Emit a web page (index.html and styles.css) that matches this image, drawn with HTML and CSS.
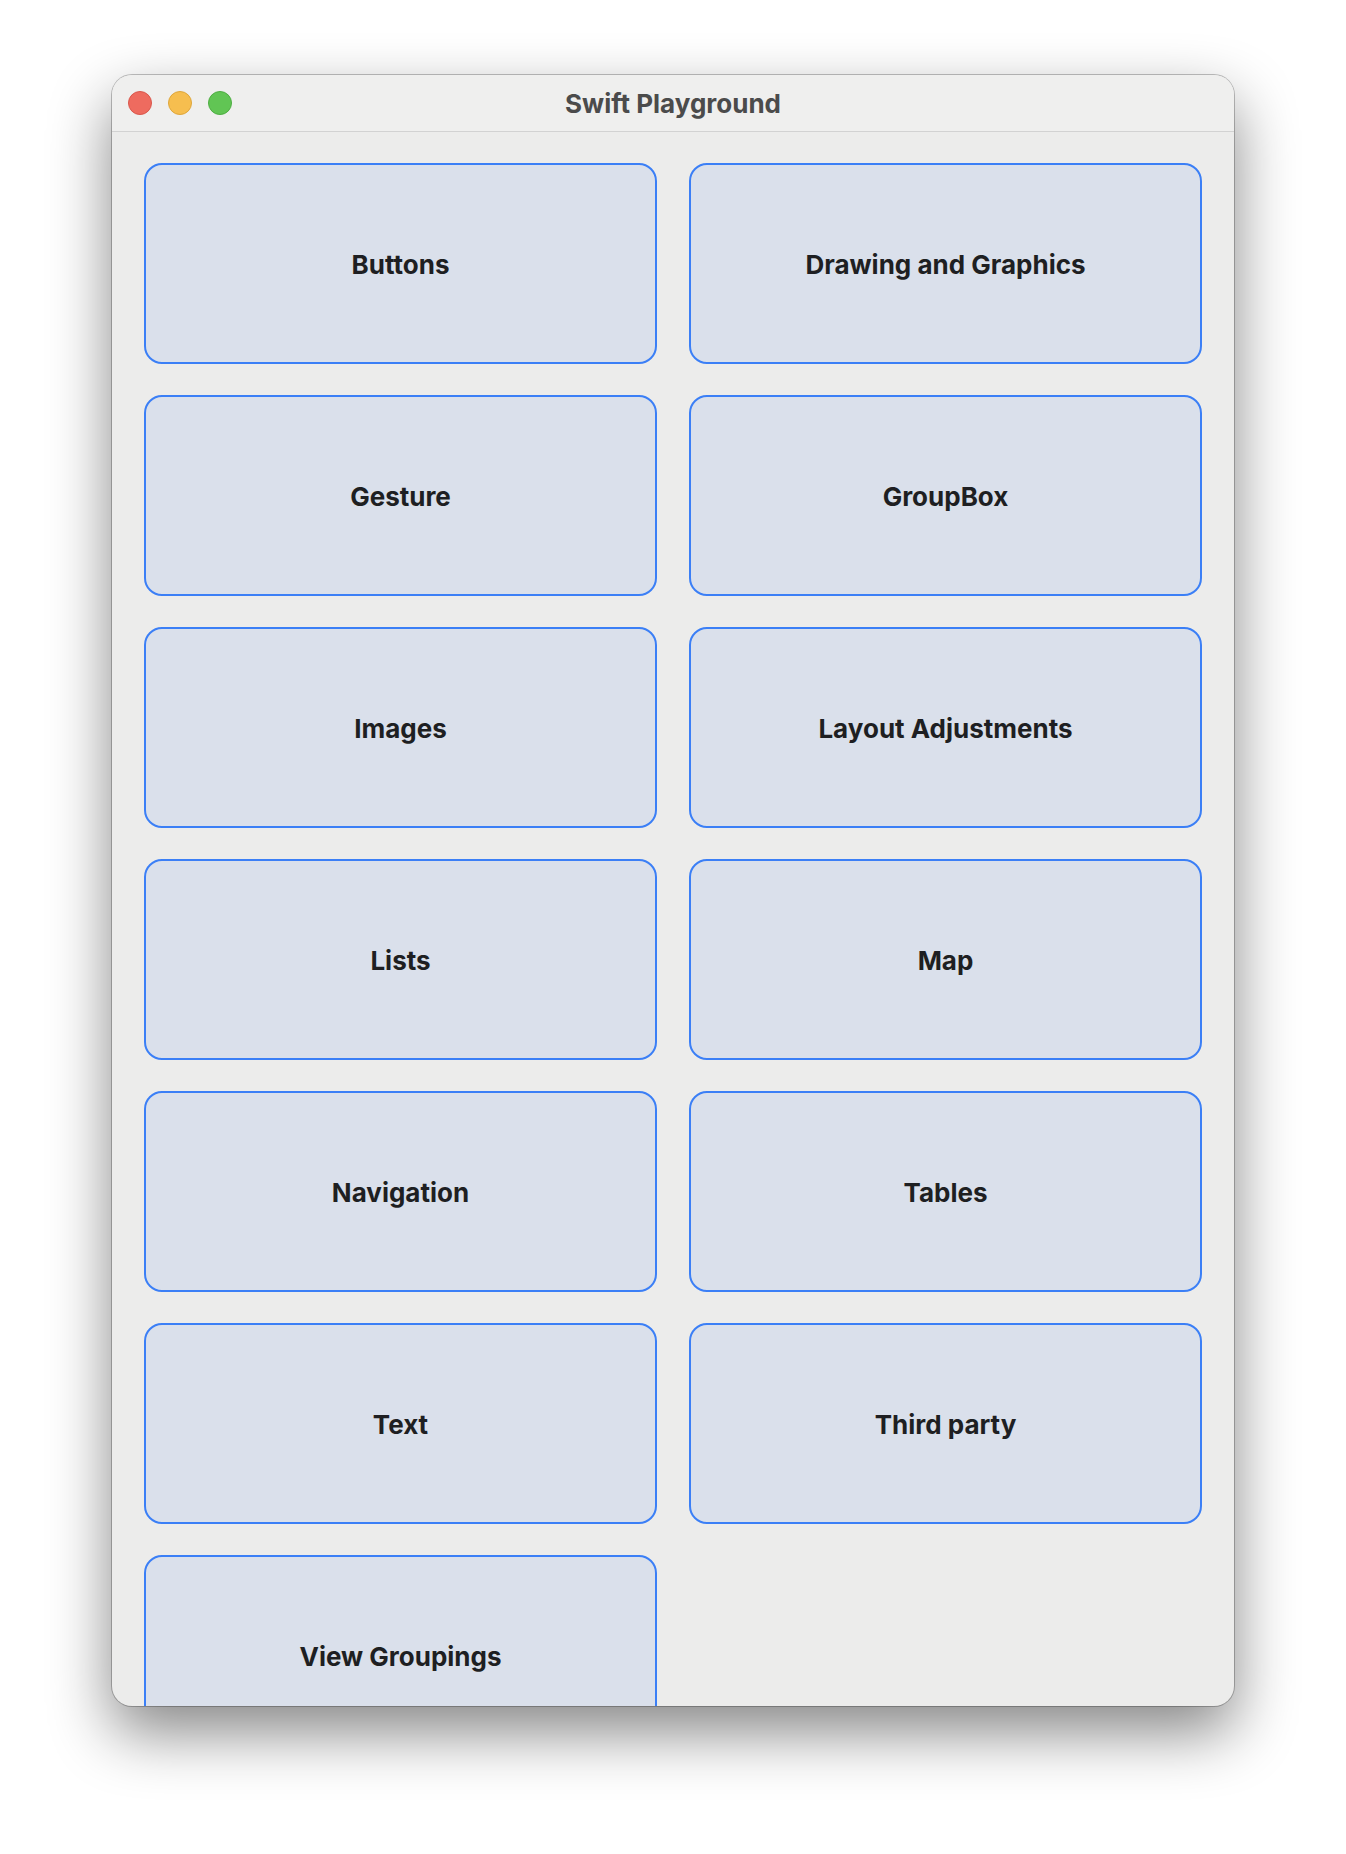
FILE: index.html
```html
<!DOCTYPE html>
<html>
<head>
<meta charset="utf-8">
<link rel="stylesheet" href="styles.css">
</head>
<body>
<div class="desktop">
  <div class="window">
    <div class="titlebar">
      <div class="lights">
        <span class="light red"></span>
        <span class="light yellow"></span>
        <span class="light green"></span>
      </div>
      <div class="title">Swift Playground</div>
    </div>
    <div class="content">
      <div class="grid">
        <div class="card">Buttons</div>
        <div class="card">Drawing and Graphics</div>
        <div class="card">Gesture</div>
        <div class="card">GroupBox</div>
        <div class="card">Images</div>
        <div class="card">Layout Adjustments</div>
        <div class="card">Lists</div>
        <div class="card">Map</div>
        <div class="card">Navigation</div>
        <div class="card">Tables</div>
        <div class="card">Text</div>
        <div class="card">Third party</div>
        <div class="card">View Groupings</div>
      </div>
    </div>
  </div>
</div>
</body>
</html>
```
FILE: styles.css
```css
html, body {
  margin: 0;
  padding: 0;
  background: #ffffff;
}
.desktop {
  width: 1346px;
  height: 1854px;
  padding: 75px 0 0 112px;
  box-sizing: border-box;
  background: #ffffff;
}
.window {
  width: 1122px;
  height: 1631px;
  border-radius: 20px;
  overflow: hidden;
  background: #ececeb;
  box-shadow: 0 0 0 1px rgba(0,0,0,0.24), 0 26px 62px rgba(0,0,0,0.48);
  display: flex;
  flex-direction: column;
}
.titlebar {
  height: 56px;
  flex: none;
  background: #efefee;
  border-bottom: 1px solid #d2d2d2;
  position: relative;
  display: flex;
  align-items: center;
  justify-content: center;
}
.lights {
  position: absolute;
  left: 16px;
  top: 16px;
  display: flex;
  gap: 16px;
}
.light {
  width: 24px;
  height: 24px;
  border-radius: 50%;
  box-sizing: border-box;
}
.red { background: #ee6b5f; border: 1px solid #d9574c; }
.yellow { background: #f6be4f; border: 1px solid #dea63b; }
.green { background: #61c554; border: 1px solid #4ead42; }
.title {
  font-family: Inter, "Noto Sans", sans-serif;
  font-weight: 700;
  font-size: 26px;
  color: #4b4b4b;
}
.content {
  padding: 31px 32px 0 32px;
  flex: 1;
  overflow: hidden;
}
.grid {
  display: grid;
  grid-template-columns: 1fr 1fr;
  column-gap: 32px;
  row-gap: 31px;
}
.card {
  height: 201px;
  box-sizing: border-box;
  border: 2px solid #3b7ff6;
  border-radius: 18px;
  background: #dae0eb;
  display: flex;
  align-items: center;
  justify-content: center;
  font-family: Inter, "Noto Sans", sans-serif;
  font-weight: 700;
  font-size: 26px;
  color: #1e1f22;
  padding-top: 2px;
}
```
